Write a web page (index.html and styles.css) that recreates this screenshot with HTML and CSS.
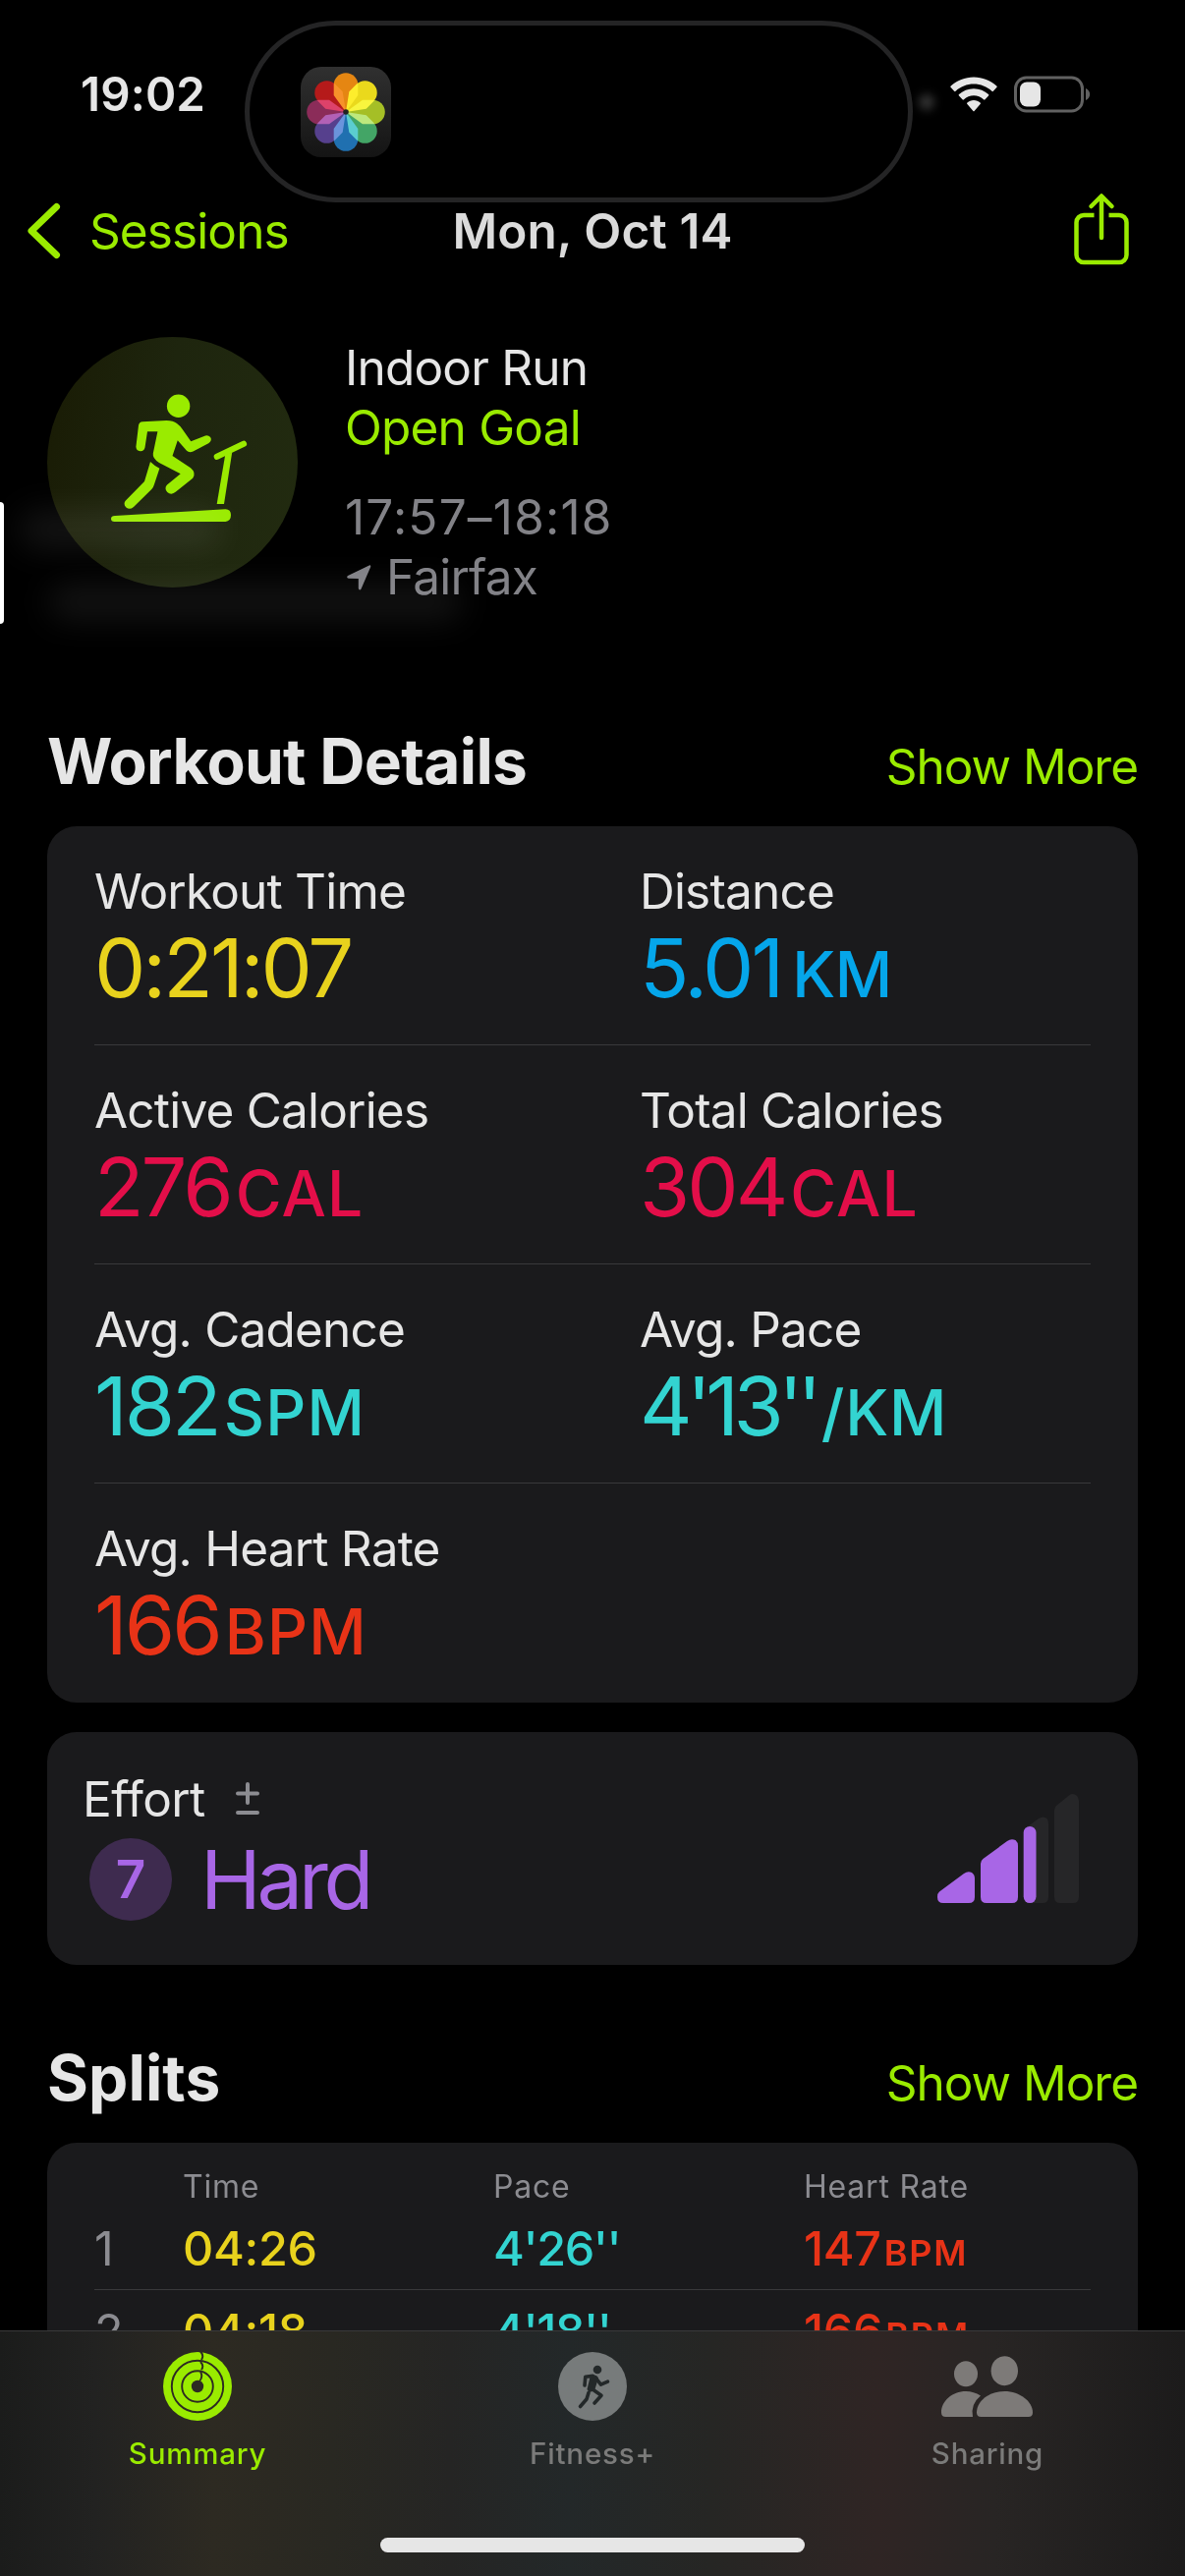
FILE: index.html
```html
<!DOCTYPE html>
<html lang="en">
<head>
  <meta charset="UTF-8">
  <meta name="viewport" content="width=device-width, initial-scale=1.0">
  <title>Mon, Oct 14</title>
  <link rel="stylesheet" href="styles.css">
</head>
<body>
  <div class="screen">
    <!-- Status bar -->
    <div class="status-bar">
      <span class="clock">19:02</span>
      <div class="status-icons">
        <svg class="wifi" width="48" height="36" viewBox="0 0 48 36">
          <path d="M24 0.5C15 0.5 6.8 4 0.7 9.6a1 1 0 0 0 0 1.5l3.4 3.6a1 1 0 0 0 1.5 0C10.500 10.200 17 7.500 24 7.500s13.500 2.700 18.400 7.200a1 1 0 0 0 1.500 0l3.400-3.600a1 1 0 0 0 0-1.500C41.200 4 33 0.500 24 0.500z"/>
          <path d="M24 12.300c-5.800 0-11.100 2.200-15 5.800a1 1 0 0 0 0 1.500l3.500 3.600a1 1 0 0 0 1.500 0c2.700-2.400 6.200-3.900 10-3.900s7.300 1.500 10 3.900a1 1 0 0 0 1.500 0l3.500-3.600a1 1 0 0 0 0-1.500c-3.900-3.600-9.200-5.800-15-5.800z"/>
          <path d="M24 24c-2.500 0-4.800.9-6.600 2.400a1 1 0 0 0 0 1.500l5.800 6.800a1 1 0 0 0 1.600 0l5.800-6.800a1 1 0 0 0 0-1.500C28.800 24.900 26.500 24 24 24z"/>
        </svg>
        <svg class="battery" width="78" height="38" viewBox="0 0 78 38">
          <rect x="1.500" y="2" width="68" height="34" rx="11" fill="none" stroke="#616161" stroke-width="3"/>
          <rect x="6" y="6.500" width="21" height="25" rx="7" fill="#e6e6e6"/>
          <path d="M73 13c2.600 1.200 4.200 3.500 4.200 6s-1.600 4.800-4.200 6z" fill="#616161"/>
        </svg>
      </div>
    </div>

    <div class="island">
      <div class="photos-icon">
        <svg width="92" height="92" viewBox="-46 -46 92 92">
          <defs>
            <path id="petal" d="M0 0L-12.300-17V-27.500a12.300 12.300 0 0 1 24.600 0V-17z"/>
          </defs>
          <g class="petals">
            <use href="#petal" fill="#e58612"/>
            <use href="#petal" fill="#ead91c" transform="rotate(45)"/>
            <use href="#petal" fill="#a5bf26" transform="rotate(90)"/>
            <use href="#petal" fill="#43a566" transform="rotate(135)"/>
            <use href="#petal" fill="#2070b0" transform="rotate(180)"/>
            <use href="#petal" fill="#56408d" transform="rotate(225)"/>
            <use href="#petal" fill="#8b2c59" transform="rotate(270)"/>
            <use href="#petal" fill="#b51a1a" transform="rotate(315)"/>
          </g>
          <circle r="2.800" fill="#222"/>
        </svg>
      </div>
    </div>

    <!-- Navigation -->
    <div class="nav">
      <div class="back">
        <svg width="34" height="58" viewBox="0 0 34 58">
          <path d="M29.500 4.500L4 29l25.500 24.500" fill="none" stroke="#9aeb00" stroke-width="7" stroke-linecap="round" stroke-linejoin="round"/>
        </svg>
        <span>Sessions</span>
      </div>
      <div class="nav-title">Mon, Oct 14</div>
      <svg class="share" width="58" height="74" viewBox="0 0 58 74" fill="none" stroke="#9aeb00" stroke-width="4.500" stroke-linecap="round" stroke-linejoin="round">
        <path d="M21.500 23H11a7.500 7.500 0 0 0-7.500 7.500v33A7.500 7.500 0 0 0 11 71h36a7.500 7.500 0 0 0 7.500-7.500v-33A7.500 7.500 0 0 0 47 23H36.500" stroke-linecap="butt"/>
        <path d="M29 46V4M18.500 14L29 3.500 39.500 14"/>
      </svg>
    </div>

    <div class="content">
      <!-- Workout header -->
      <div class="hero">
        <div class="hero-icon">
          <svg width="255" height="255" viewBox="48 343 255 255" fill="#9aeb00">
            <circle cx="181.600" cy="413.300" r="11.700"/>
            <path d="M141 433q.6-3.500 4-3.700L169.400 428q7 0 10.600 3 3.500 2.500 5.700 6L194.300 449.300 209 443.500q4-1 5.600 2.300 1 3.400-2.400 5.400L196.500 459.500q-4 1.700-6.500-.8L180.800 448.300 175.500 464 194 476.200q6 5 2.200 10.500L179 500.500q-4.500 4-8.700.5-3.500-4-.3-7.500L183.700 482.300 162 471q-7-4.500-6.200-9.500L160.400 439.300H150L147.500 455.500q-1 4-4.700 3.800-4.200-.4-4.400-4.500z"/>
            <path d="M153 470q4 4 9.400 6.700L157 493q-.8 3-2.700 5L136 516q-4 3.400-7.600.6-3.400-3.600-.5-7.100L147 490z"/>
            <path d="M117 525L229.500 518.300q5.500 0 5.500 6t-5.500 6.700H116.500q-3.500 0-3.500-3t4-3z"/>
            <path d="M229.200 463l7-2.500L228 513h-7.300z"/>
            <path d="M220.800 464.800L248 451.800" stroke="#9aeb00" stroke-width="6.200" stroke-linecap="round"/>
          </svg>
        </div>
        <div class="hero-text">
          <div class="workout-name">Indoor Run</div>
          <div class="workout-goal">Open Goal</div>
          <div class="workout-time">17:57–18:18</div>
          <div class="workout-place">
            <svg width="25" height="26" viewBox="0 0 25 26"><path d="M22.800.4Q24.600 0 24.200 2L14.500 24.500q-1.700 2-2.700-.4V14L1.800 13.800Q-1 13 1 11z" fill="#828287"/></svg>
            <span>Fairfax</span>
          </div>
        </div>
      </div>

      <!-- Workout details -->
      <div class="section-head">
        <h2>Workout Details</h2>
        <span class="more">Show More</span>
      </div>
      <div class="card details">
        <div class="row">
          <div><div class="label">Workout Time</div><div class="value yellow">0:21:07</div></div>
          <div><div class="label">Distance</div><div class="value blue">5.01<span class="unit">KM</span></div></div>
        </div>
        <div class="row">
          <div><div class="label">Active Calories</div><div class="value pink">276<span class="unit">CAL</span></div></div>
          <div><div class="label">Total Calories</div><div class="value pink">304<span class="unit">CAL</span></div></div>
        </div>
        <div class="row">
          <div><div class="label">Avg. Cadence</div><div class="value cyan">182<span class="unit">SPM</span></div></div>
          <div><div class="label">Avg. Pace</div><div class="value cyan pace">4'13''<span class="unit">/KM</span></div></div>
        </div>
        <div class="row">
          <div><div class="label">Avg. Heart Rate</div><div class="value red">166<span class="unit">BPM</span></div></div>
        </div>
      </div>

      <div class="card effort">
        <div class="effort-info">
          <div class="effort-label">
            <span>Effort</span>
            <svg width="24" height="34" viewBox="0 0 24 34" stroke="#8c8c91" stroke-width="4" stroke-linecap="round"><path d="M2 11.500h20M12 2v19M2 31h20"/></svg>
          </div>
          <div class="effort-value">
            <span class="effort-score">7</span>
            <span class="effort-name">Hard</span>
          </div>
        </div>
        <svg class="effort-chart" width="144" height="111" viewBox="0 0 144 111">
          <path d="M88 36L103 25q5-3 8.500 0 1.500 2 1.500 5v75q0 6-6 6H94q-6 0-6-6z" fill="#262628"/>
          <path d="M119 17q0-3 2-5L134 1.500q4-3 8 .5 2 2 2 5v98q0 6-6 6h-13q-6 0-6-6z" fill="#262628"/>
          <path d="M2 99.500L27 81q4-3 8-1 3 2 3 6v19q0 6-6 6H6q-6 0-6-6 0-4 2-5.500z" fill="#a866e6"/>
          <path d="M44 71q0-3 2.500-5L71 48q4-3 8.500-1 2.500 2 2.500 6v52q0 6-6 6H50q-6 0-6-6z" fill="#a866e6"/>
          <rect x="87.700" y="33" width="12.800" height="78" rx="6.400" fill="#a866e6"/>
        </svg>
      </div>

      <!-- Splits -->
      <div class="section-head splits-head">
        <h2>Splits</h2>
        <span class="more">Show More</span>
      </div>
      <div class="card splits">
        <div class="split-header"><span></span><span>Time</span><span>Pace</span><span>Heart Rate</span></div>
        <div class="split-row">
          <span class="num">1</span><span class="yellow">04:26</span><span class="cyan split-pace">4'26''</span><span class="red">147<span class="split-unit">BPM</span></span>
        </div>
        <div class="split-row">
          <span class="num">2</span><span class="yellow">04:18</span><span class="cyan split-pace">4'18''</span><span class="red">166<span class="split-unit">BPM</span></span>
        </div>
      </div>
    </div>

    <!-- Tab bar -->
    <div class="tab-bar">
      <div class="tabs">
        <div class="tab active">
          <svg width="70" height="70" viewBox="-35 -35 70 70">
            <circle r="35" fill="#9aeb00"/>
            <g fill="none" stroke="#2d2a22" stroke-width="1.900">
              <circle r="26.200"/>
              <circle r="15.800"/>
              <path d="M3-35.500q4 4 1 8.500M3-25q4 4 1 8M3-15q3 5-1 10"/>
            </g>
            <circle r="6.200" fill="#2d2a22"/>
          </svg>
          <span>Summary</span>
        </div>
        <div class="tab">
          <svg width="70" height="70" viewBox="0 0 70 70">
            <circle cx="35" cy="35" r="35" fill="#777b7b"/>
            <circle cx="40" cy="18" r="4.300" fill="#232829"/>
            <g fill="none" stroke="#232829" stroke-width="3.600" stroke-linecap="round" stroke-linejoin="round">
              <path d="M27 34l.8-8.800 7.500-.8M38 26l5.500 7.200 7-3M36.500 39l7.500 5.300-7 7.700M31 41.500l-2 6.500-6.500 7.500"/>
            </g>
            <path d="M33 23.500q6-1 8 3l-4 13-5.500 1.500-2-3z" fill="#232829"/>
          </svg>
          <span>Fitness+</span>
        </div>
        <div class="tab">
          <svg width="96" height="70" viewBox="0 0 96 70" fill="#7d7a78">
            <ellipse cx="26" cy="22.200" rx="12" ry="13"/>
            <ellipse cx="65.300" cy="19.200" rx="13.700" ry="15"/>
            <path d="M41 44.500Q34 40 26 40C12 40 1 50 1 61.500Q1 66 5.500 66H33Q30.500 53 41 44.500z"/>
            <path d="M65.300 40C49 40 37 50.500 37 61.500Q37 66 41.500 66H89.500Q94 66 94 61.500C94 50.500 81 40 65.300 40z"/>
          </svg>
          <span>Sharing</span>
        </div>
      </div>
      <div class="home-indicator"></div>
    </div>

    <!-- Fading overlay -->
    <div class="side-handle"></div>
    <div class="smudge smudge-top"></div>
    <div class="smudge smudge-bottom"></div>
    <div class="smudge smudge-status"></div>
  </div>
</body>
</html>
```
FILE: styles.css
```css
body {
  margin: 0;
  background: #000;
  overflow: hidden;
  font-family: Inter, "Liberation Sans", sans-serif;
  font-size: 49.5px;
  font-variant-ligatures: none;
  color: #e6e6e6;
}

svg {
  display: block;
  flex-shrink: 0;
}

.screen {
  position: relative;
  display: flex;
  flex-direction: column;
  width: 1206px;
  height: 2622px;
  overflow: hidden;
}

/* Status bar */
.status-bar {
  display: flex;
  justify-content: space-between;
  align-items: center;
  height: 177px;
  padding: 14px 96px 0 82px;
  box-sizing: border-box;
}

.clock {
  font-size: 47.5px;
  font-weight: 600;
  letter-spacing: 0.1px;
}

.status-icons {
  display: flex;
  align-items: center;
  gap: 17px;
}

.wifi {
  fill: #e6e6e6;
}

.island {
  position: absolute;
  left: 249px;
  top: 21px;
  width: 680px;
  height: 185px;
  padding: 42px 0 0 52px;
  box-sizing: border-box;
  border: 5px solid #242425;
  border-radius: 93px;
}

.photos-icon {
  width: 92px;
  height: 92px;
  border-radius: 21px;
  background: linear-gradient(#303030, #141414);
}

.petals {
  isolation: isolate;
}

.petals use {
  mix-blend-mode: screen;
}

/* Navigation */
.nav {
  display: grid;
  grid-template-columns: 1fr auto 1fr;
  align-items: center;
  height: 116px;
  padding: 0 56px 0 28px;
}

.back {
  display: flex;
  align-items: center;
  gap: 29px;
  color: #9aeb00;
  letter-spacing: -0.9px;
}

.nav-title {
  font-weight: 600;
  color: #dbdbdb;
  letter-spacing: 0.1px;
  padding-left: 28px;
}

.share {
  justify-self: end;
  margin-bottom: 5px;
}

.content {
  flex: 1;
  min-height: 0;
  overflow: hidden;
  padding: 50px 48px 0;
}

/* Workout header */
.hero {
  display: flex;
  gap: 48px;
  height: 255px;
}

.hero-icon {
  width: 255px;
  height: 255px;
  border-radius: 50%;
  background: linear-gradient(100deg, #191b04, #1e250e 45%, #222b10);
}

.hero-text {
  padding-top: 1px;
  line-height: 61px;
  letter-spacing: -0.8px;
}

.workout-goal {
  color: #9aeb00;
}

.workout-time {
  margin-top: 30px;
  color: #828287;
  letter-spacing: 1.2px;
}

.workout-place {
  display: flex;
  align-items: center;
  gap: 15px;
  color: #828287;
  padding-left: 2px;
}

/* Sections */
.section-head {
  display: flex;
  justify-content: space-between;
  align-items: baseline;
  height: 80px;
  margin: 137px 0 26px;
  line-height: 80px;
}

.section-head h2 {
  margin: 0;
  font-size: 64px;
  font-weight: 700;
  letter-spacing: -0.7px;
}

.section-head.splits-head h2 {
  letter-spacing: 0.1px;
}

.more {
  color: #9aeb00;
  letter-spacing: -1px;
}

.card {
  border-radius: 30px;
  background: #1a1a1c;
}

.details {
  padding: 0 48px;
}

.row {
  display: grid;
  grid-template-columns: 555px 1fr;
  height: 223px;
  padding-top: 36px;
  box-sizing: border-box;
  border-bottom: 1px solid #39393b;
}

.row:last-child {
  border-bottom: none;
}

.label {
  line-height: 60px;
  letter-spacing: -0.8px;
}

.value {
  font-size: 83px;
  line-height: 96px;
  letter-spacing: -3px;
}

.unit {
  margin-left: 5px;
  font-size: 64px;
  font-weight: 500;
  letter-spacing: 1.2px;
}

.blue .unit {
  margin-left: 11px;
  letter-spacing: -0.5px;
}

.pace {
  letter-spacing: -5.6px;
}

.pace .unit {
  letter-spacing: 0.8px;
}

.yellow { color: #e8d21d; }
.blue { color: #05a6ea; }
.pink { color: #e30e49; }
.cyan { color: #33d4d1; }
.red { color: #e83317; }

/* Effort */
.effort {
  display: flex;
  justify-content: space-between;
  height: 237px;
  margin-top: 30px;
  padding: 38px 60px 0 36px;
  box-sizing: border-box;
}

.effort-label {
  display: flex;
  align-items: center;
  gap: 31px;
  line-height: 60px;
  letter-spacing: -0.6px;
}

.effort-value {
  display: flex;
  align-items: center;
  gap: 29px;
  height: 104px;
  padding-left: 7px;
  color: #a866e6;
}

.effort-score {
  width: 84px;
  height: 84px;
  border-radius: 50%;
  background: #3e2b4f;
  font-size: 53px;
  font-weight: 600;
  line-height: 84px;
  text-align: center;
}

.effort-name {
  font-size: 83px;
  letter-spacing: -4.2px;
}

.effort-chart {
  margin-top: 25px;
}

/* Splits */
.splits {
  height: 400px;
  padding: 0 48px;
}

.splits-head {
  margin-top: 75px;
}

.split-header,
.split-row {
  display: grid;
  grid-template-columns: 90px 316px 316px 1fr;
}

.split-header {
  height: 66px;
  padding-top: 22px;
  box-sizing: border-box;
  font-size: 32px;
  line-height: 45px;
  letter-spacing: 0.8px;
  color: #8c8c91;
}

.split-row {
  height: 84px;
  line-height: 84px;
  box-sizing: border-box;
  border-bottom: 1px solid #39393b;
  font-size: 48.5px;
  font-weight: 450;
  letter-spacing: -0.3px;
}

.num {
  color: #8c8c91;
  font-weight: 400;
}

.split-pace {
  letter-spacing: -1.4px;
}

.split-unit {
  margin-left: 3px;
  font-size: 36px;
  font-weight: 600;
  letter-spacing: 1.8px;
}

/* Tab bar */
.tab-bar {
  height: 250px;
  padding-top: 21px;
  box-sizing: border-box;
  border-top: 1px solid #39393a;
  background: linear-gradient(90deg, #1b1c1b 0%, #222221 8%, #2d2a22 18%, #292822 28%, #252524 38%, #232829 48%, #262624 60%, #2f2524 74%, #282524 84%, #1c1b1b 100%);
}

.tabs {
  display: grid;
  grid-template-columns: repeat(3, 1fr);
}

.tab {
  display: flex;
  flex-direction: column;
  align-items: center;
  gap: 13px;
  font-size: 29.5px;
  font-weight: 500;
  line-height: 40px;
  letter-spacing: 0.8px;
  color: #7b7b7a;
}

.tab.active {
  color: #9aeb00;
}

.home-indicator {
  width: 432px;
  height: 15px;
  margin: 66px auto 0;
  border-radius: 8px;
  background: #e6e6e6;
}

/* Fading overlay */
.side-handle {
  position: absolute;
  left: 0;
  top: 511px;
  width: 4px;
  height: 124px;
  border-radius: 0 4px 4px 0;
  background: #fff;
}

.smudge {
  position: absolute;
  background: rgba(255, 255, 255, 0.08);
  border-radius: 20px;
  filter: blur(16px);
}

.smudge-top {
  left: 20px;
  top: 520px;
  width: 205px;
  height: 38px;
}

.smudge-bottom {
  left: 50px;
  top: 596px;
  width: 420px;
  height: 34px;
}

.smudge-status {
  left: 935px;
  top: 96px;
  width: 16px;
  height: 16px;
  background: #333;
  filter: blur(5px);
}
```
